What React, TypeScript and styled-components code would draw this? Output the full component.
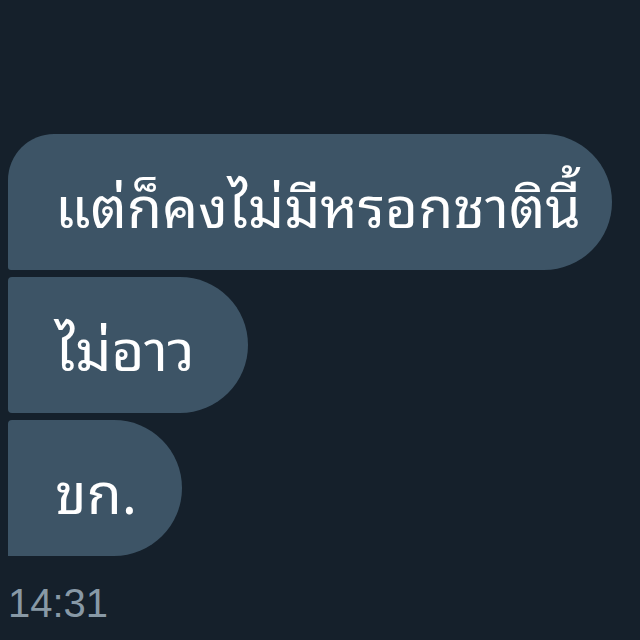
import React from "react";
import styled, { createGlobalStyle } from "styled-components";

const Global = createGlobalStyle`
  html, body { margin: 0; padding: 0; background: #15202b; }
  #root { width: 640px; height: 640px; overflow: hidden; }
`;

const Page = styled.div`
  width: 640px;
  height: 640px;
  box-sizing: border-box;
  padding: 134px 0 0 8px;
  display: flex;
  flex-direction: column;
  align-items: flex-start;
  background: #15202b;
`;

const Group = styled.div`
  display: flex;
  flex-direction: column;
  align-items: flex-start;
  gap: 7px;
`;

type Pos = "first" | "middle" | "last";

const radii: Record<Pos, string> = {
  first: "46px 68px 68px 3px",
  middle: "4px 68px 68px 4px",
  last: "4px 68px 68px 0px",
};

const Bubble = styled.div<{ $pos: Pos; $padRight?: number }>`
  box-sizing: border-box;
  height: 136px;
  padding: 0 ${(p) => p.$padRight ?? 50}px 0 47px;
  display: flex;
  align-items: center;
  background: #3d5466;
  color: #ffffff;
  font-family: "Noto Sans Thai Looped", "Thonburi", "Loma", "Garuda", "Norasi", "Tlwg Typo", "Kinnari", "Laksaman", "Noto Serif Thai", "Noto Sans Thai", sans-serif;
  font-size: 57px;
  white-space: nowrap;
  border-radius: ${(p) => radii[p.$pos]};
`;

const Time = styled.div`
  margin-top: 27px;
  font-family: "Liberation Sans", Arial, sans-serif;
  font-size: 40px;
  color: #8899a6;
  line-height: 1;
`;

export default function App() {
  return (
    <>
      <Global />
      <Page>
        <Group>
          <Bubble $pos="first" $padRight={31}>แต่ก็คงไม่มีหรอกชาตินี้</Bubble>
          <Bubble $pos="middle" $padRight={53}>ไม่อาว</Bubble>
          <Bubble $pos="last" $padRight={45}>ขก.</Bubble>
        </Group>
        <Time>14:31</Time>
      </Page>
    </>
  );
}
